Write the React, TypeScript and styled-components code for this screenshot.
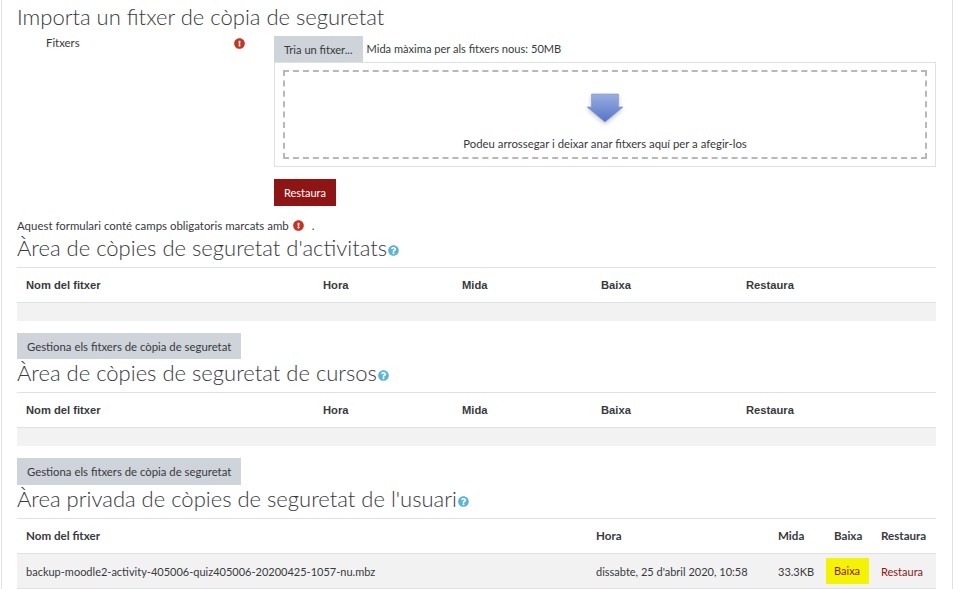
import React from 'react';
import styled, { createGlobalStyle } from 'styled-components';
import { FaExclamationCircle, FaQuestionCircle } from 'react-icons/fa';

const GlobalStyle = createGlobalStyle`
  html, body {
    margin: 0;
    padding: 0;
    background: #fff;
    overflow: hidden;
  }
  body {
    font-family: "Lato", "Open Sans", sans-serif;
    font-size: 11.35px;
    color: #373a3c;
  }
`;

const Page = styled.div`
  box-sizing: border-box;
  width: 952px;
  height: 589px;
  margin-left: 1px;
  padding: 0 16px 0 15px;
  border-left: 1px solid #dee2e6;
  border-right: 1px solid #dee2e6;
`;

const Heading = styled.h2`
  display: flex;
  align-items: center;
  box-sizing: border-box;
  height: ${(p: any) => p.$height || 33}px;
  margin: 0;
  padding-bottom: ${(p: any) => p.$lift ?? 6}px;
  font-family: "Lato", sans-serif;
  font-size: 22px;
  font-weight: 300;
  color: #373a3c;
  white-space: nowrap;
`;

const HelpIcon = styled(FaQuestionCircle)`
  width: 11px;
  height: 11px;
  margin: 6px 0 0 1px;
  color: #58b5d8;
`;

const ErrorIcon = styled(FaExclamationCircle)`
  display: block;
  flex: none;
  width: 11px;
  height: 11px;
  color: #ca3120;
`;

const FormRow = styled.div`
  display: flex;
  height: 143px;
`;

const FieldLabel = styled.div`
  display: flex;
  justify-content: space-between;
  align-items: center;
  box-sizing: border-box;
  width: 257px;
  height: 15px;
  padding: 0 29px;
  line-height: 15px;
`;

const LabelText = styled.span`
  margin-top: -2px;
`;

const Field = styled.div`
  flex: 1;
`;

const PickerBar = styled.div`
  display: flex;
  align-items: center;
  height: 26px;
  gap: 4px;
  font-size: 11.1px;
`;

const PickerHint = styled.span`
  margin-bottom: 2px;
`;

const GreyButton = styled.button`
  box-sizing: border-box;
  height: ${(p: any) => p.$height || 26}px;
  padding: 0 10px;
  border: 0;
  background: #ced4da;
  font: inherit;
  color: #373a3c;
  white-space: nowrap;
`;

const DropBox = styled.div`
  box-sizing: border-box;
  height: 105px;
  padding: 7px 8px;
  border: 1px solid #dee2e6;
`;

const DropArea = styled.div`
  display: flex;
  flex-direction: column;
  align-items: center;
  box-sizing: border-box;
  height: 89px;
  padding-top: 21px;
  border: 2px dashed #b8b8b8;
`;

const DropArrow = styled.svg`
  display: block;
  width: 40px;
  height: 32px;
  filter: drop-shadow(0 2px 2px rgba(0, 0, 0, 0.22));
`;

const DropText = styled.div`
  margin-top: 11px;
  line-height: 16px;
`;

const SubmitButton = styled.button`
  display: block;
  box-sizing: border-box;
  width: 62px;
  height: 27px;
  margin-left: 257px;
  padding: 0;
  border: 0;
  background: #8f1515;
  color: #fff;
  font: inherit;
  font-size: 11px;
`;

const RequiredNote = styled.div`
  display: flex;
  align-items: center;
  gap: 4px;
  height: 16px;
  margin-top: 11px;
  margin-bottom: 1px;
  font-size: 11.45px;
  white-space: nowrap;
`;

const NoteDot = styled.span`
  margin-left: 4px;
`;

const Table = styled.table`
  width: 919px;
  border-collapse: collapse;
  table-layout: fixed;
  border-top: 1px solid #dee2e6;
`;

const HeadCell = styled.th`
  box-sizing: border-box;
  height: 35px;
  padding: 0 0 1px 9px;
  border-bottom: 1px solid #dee2e6;
  text-align: left;
  font-family: ${(p: any) => (p.$arial ? '"Liberation Sans"' : '"Lato"')}, sans-serif;
  font-size: ${(p: any) => (p.$arial ? '11.2px' : '11.6px')};
  font-weight: 700;
  color: #373a3c;
`;

const StripeRow = styled.tr`
  background: #f2f2f2;
`;

const EmptyCell = styled.td`
  height: 18px;
  padding: 0;
`;

const Cell = styled.td`
  box-sizing: border-box;
  height: 35px;
  padding: 0 0 0 9px;
  border-bottom: 1px solid #dee2e6;
  font-size: 11px;
  white-space: nowrap;
`;

const BaixaLink = styled.a`
  display: inline-block;
  margin-left: -8px;
  padding: 0 9px 0 8px;
  line-height: 26px;
  background: #f4f400;
  color: #8f1515;
`;

const RestauraLink = styled.a`
  color: #8f1515;
`;

const ManageRow = styled.div`
  margin-top: 12px;
`;

const emptyCols = [297, 139, 139, 145, 199];
const filledCols = [570, 182, 56, 47, 64];
const names = ['Nom del fitxer', 'Hora', 'Mida', 'Baixa', 'Restaura'];

const Columns = ({ widths }: { widths: number[] }) => (
  <colgroup>
    {widths.map((w, i) => (
      <col key={i} width={w} />
    ))}
  </colgroup>
);

const EmptyBackups = ({ buttonHeight }: { buttonHeight: number }) => (
  <>
    <Table>
      <Columns widths={emptyCols} />
      <thead>
        <tr>
          {names.map((n) => (
            <HeadCell key={n} $arial>
              {n}
            </HeadCell>
          ))}
        </tr>
      </thead>
      <tbody>
        <StripeRow>
          <EmptyCell colSpan={5} />
        </StripeRow>
      </tbody>
    </Table>
    <ManageRow>
      <GreyButton $height={buttonHeight}>Gestiona els fitxers de còpia de seguretat</GreyButton>
    </ManageRow>
  </>
);

export default function App() {
  return (
    <Page>
      <GlobalStyle />
      <Heading $height={36} $lift={3}>
        Importa un fitxer de còpia de seguretat
      </Heading>
      <FormRow>
        <FieldLabel>
          <LabelText>Fitxers</LabelText>
          <ErrorIcon />
        </FieldLabel>
        <Field>
          <PickerBar>
            <GreyButton>Tria un fitxer...</GreyButton>
            <PickerHint>Mida màxima per als fitxers nous: 50MB</PickerHint>
          </PickerBar>
          <DropBox>
            <DropArea>
              <DropArrow viewBox="0 0 40 32">
                <defs>
                  <linearGradient id="arrowFill" x1="0" y1="0" x2="0" y2="1">
                    <stop offset="0" stopColor="#9aaede" />
                    <stop offset="1" stopColor="#5474c8" />
                  </linearGradient>
                </defs>
                <path
                  d="M6.5 1h27v13H38L20 29 2 14h4.500z"
                  fill="url(#arrowFill)"
                  stroke="#7f97d6"
                  strokeWidth="0.6"
                />
              </DropArrow>
              <DropText>Podeu arrossegar i deixar anar fitxers aquí per a afegir-los</DropText>
            </DropArea>
          </DropBox>
        </Field>
      </FormRow>
      <SubmitButton>Restaura</SubmitButton>
      <RequiredNote>
        Aquest formulari conté camps obligatoris marcats amb <ErrorIcon />
        <NoteDot>.</NoteDot>
      </RequiredNote>
      <Heading>
        Àrea de còpies de seguretat d'activitats
        <HelpIcon />
      </Heading>
      <EmptyBackups buttonHeight={26} />
      <Heading>
        Àrea de còpies de seguretat de cursos
        <HelpIcon />
      </Heading>
      <EmptyBackups buttonHeight={27} />
      <Heading>
        Àrea privada de còpies de seguretat de l'usuari
        <HelpIcon />
      </Heading>
      <Table>
        <Columns widths={filledCols} />
        <thead>
          <tr>
            {names.map((n) => (
              <HeadCell key={n}>{n}</HeadCell>
            ))}
          </tr>
        </thead>
        <tbody>
          <StripeRow>
            <Cell>backup-moodle2-activity-405006-quiz405006-20200425-1057-nu.mbz</Cell>
            <Cell>dissabte, 25 d'abril 2020, 10:58</Cell>
            <Cell>33.3KB</Cell>
            <Cell>
              <BaixaLink>Baixa</BaixaLink>
            </Cell>
            <Cell>
              <RestauraLink>Restaura</RestauraLink>
            </Cell>
          </StripeRow>
        </tbody>
      </Table>
    </Page>
  );
}
